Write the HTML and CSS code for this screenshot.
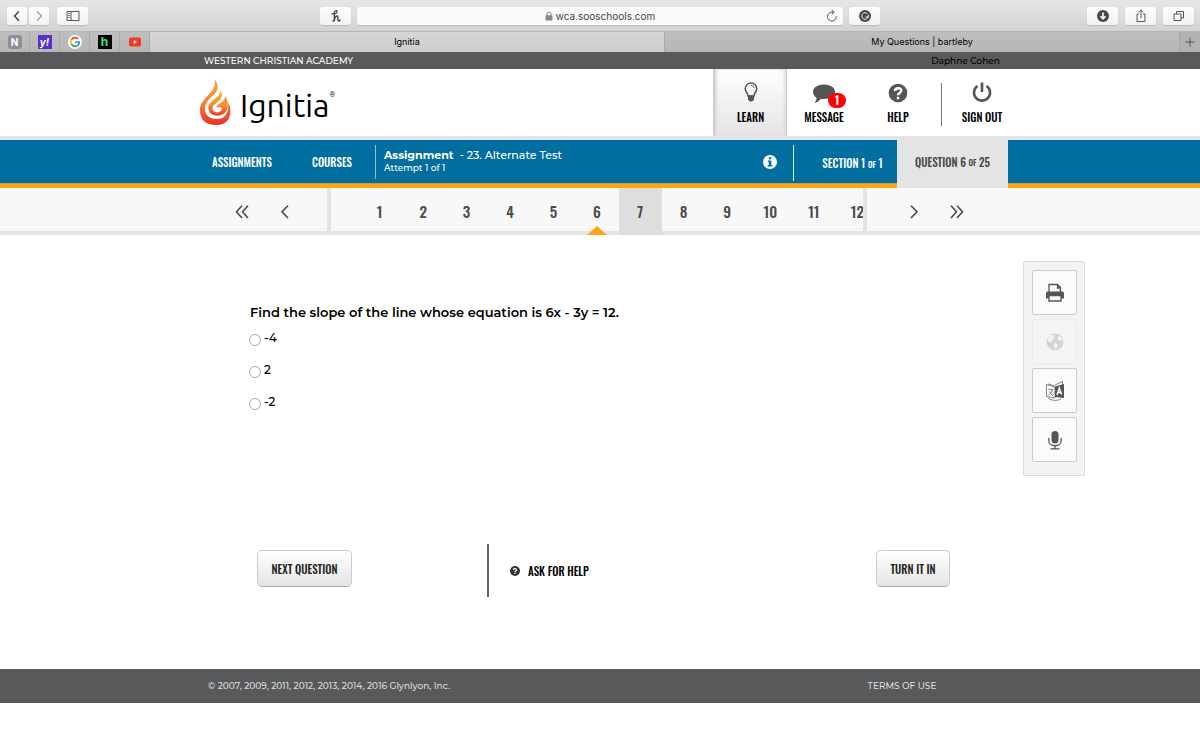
FILE: index.html
```html
<!DOCTYPE html>
<html lang="en">
<head>
<meta charset="utf-8">
<meta name="viewport" content="width=device-width, initial-scale=1">
<title>Ignitia</title>
<link rel="stylesheet" href="styles.css">
</head>
<body>
<div class="toolbar">
  <div class="tools tools-left">
    <div class="pair">
      <button class="tool" aria-label="Back"><svg width="20" height="18" viewBox="0 0 20 18"><path d="M12 4.500 7.500 9l4.500 4.800" class="ln dark"/></svg></button>
      <button class="tool" aria-label="Forward"><svg width="20" height="18" viewBox="0 0 20 18"><path d="M8 4.500 12.500 9 8 13.800" class="ln pale"/></svg></button>
    </div>
    <button class="tool wide" aria-label="Sidebar"><svg width="16" height="18" viewBox="0 0 16 18"><path d="M2 4.500h12v9H2zM6 4.500v9M3.200 6.500h1.500M3.200 8.500h1.500M3.200 10.500h1.500" class="ln thin"/></svg></button>
  </div>
  <button class="tool wide" aria-label="Honey"><svg width="18" height="18" viewBox="0 0 18 18"><path d="M4.500 6.800c3.500.6 5.500-.6 5.500-2.400C10 3 7.300 3.500 7.300 6v8c.3-2.800 1.300-5 2.800-5 1.900 0-.3 5 1.500 5 .8 0 1.400-.5 1.900-1.300M5.500 14h1.800" class="ln honey"/></svg></button>
  <div class="address">
    <span class="site"><svg width="8" height="10" viewBox="0 0 8 10"><path d="M2 5V3a2 2 0 0 1 4 0v2" fill="none" stroke="#888"/><rect x=".5" y="4.300" width="7" height="5.200" rx=".7" fill="#888"/></svg><span>wca.sooschools.com</span></span>
    <button class="reload" aria-label="Reload"><svg width="12" height="14" viewBox="0 0 12 14"><path d="M10.300 7.200A4.400 4.400 0 1 1 6 3.200h1.500M5.700 1l2.500 2.200-2.500 2.300" class="ln thin"/></svg></button>
  </div>
  <button class="tool wide" aria-label="Grammarly"><svg width="14" height="14" viewBox="0 0 14 14"><circle cx="7" cy="7" r="6" fill="#484848"/><path d="M9.500 4.800A3.300 3.300 0 1 0 10.200 8H7.500M10.300 5.700v2.700" fill="none" stroke="#eee"/></svg></button>
  <div class="tools tools-right">
    <button class="tool wide" aria-label="Downloads"><svg width="14" height="14" viewBox="0 0 14 14"><circle cx="7" cy="7" r="6" fill="#484848"/><path d="M7 3.500v6M4.500 7.200 7 9.800l2.500-2.600" fill="none" stroke="#fff" stroke-width="1.600"/></svg></button>
    <button class="tool wide" aria-label="Share"><svg width="14" height="16" viewBox="0 0 14 16"><path d="M5 6H3v7.500h8V6H9M7 10V2M4.700 4.200 7 1.800l2.300 2.400" class="ln thin"/></svg></button>
    <button class="tool wide" aria-label="Show tabs"><svg width="14" height="14" viewBox="0 0 14 14"><path d="M2 5h7v6.500H2zM4.500 5V2.500h7V9H9" class="ln thin"/></svg></button>
  </div>
</div>
<div class="tabs">
  <a class="pin" href="#"><svg width="14" height="14" viewBox="0 0 14 14" aria-hidden="true"><rect width="14" height="14" rx="3" fill="#8e8e99"/></svg><b class="glyph">N</b></a>
  <a class="pin" href="#"><svg width="14" height="14" viewBox="0 0 14 14" aria-hidden="true"><rect width="14" height="14" fill="#5530cc"/></svg><b class="glyph slant">y!</b></a>
  <a class="pin" href="#" aria-label="Google"><svg width="14" height="14" viewBox="0 0 14 14"><circle cx="7" cy="7" r="7" fill="#fff"/><g fill="none" stroke-width="1.700"><path d="M10.200 3.900A4.300 4.300 0 0 0 3.400 4.700" stroke="#ea4335"/><path d="M3.400 4.700a4.300 4.300 0 0 0 0 4.600" stroke="#fbbc05"/><path d="M3.400 9.300a4.300 4.300 0 0 0 6.300 1.200" stroke="#34a853"/><path d="M9.700 10.500A4.300 4.300 0 0 0 11.300 7H7" stroke="#4285f4"/></g></svg></a>
  <a class="pin" href="#"><svg width="14" height="14" viewBox="0 0 14 14" aria-hidden="true"><rect width="14" height="14" fill="#000"/></svg><b class="glyph green">h</b></a>
  <a class="pin" href="#" aria-label="YouTube"><svg width="12" height="10" viewBox="0 0 12 10"><rect y=".5" width="12" height="9" rx="2" fill="#ee3a24"/><path d="M4.700 3v4L8 5z" fill="#fff"/></svg></a>
  <a class="tab current" href="#">Ignitia</a>
  <a class="tab" href="#">My Questions | bartleby</a>
  <button class="add" aria-label="New tab"><svg width="10" height="10" viewBox="0 0 10 10"><path d="M5 .5v9M.5 5h9" class="ln thin"/></svg></button>
</div>

<div class="school shell"><span>WESTERN CHRISTIAN ACADEMY</span><span class="student">Daphne Cohen</span></div>

<header class="masthead shell">
  <a class="brand" href="#">
    <svg width="32" height="47" viewBox="0 0 32 47" aria-hidden="true">
      <defs><linearGradient id="fire" x1="0" y1="0" x2="0" y2="1"><stop offset="0" stop-color="#f7a531"/><stop offset=".5" stop-color="#f58634"/><stop offset="1" stop-color="#e92e2b"/></linearGradient>
      <linearGradient id="ember" x1="0" y1="0" x2="0" y2="1"><stop offset="0" stop-color="#fbb03b"/><stop offset=".6" stop-color="#f68b33"/><stop offset="1" stop-color="#ea3a2c"/></linearGradient></defs>
      <path d="M14.500 0c5 7 4 11-1 16C8 21 5 25 5 30c0 7 6 10 12 10 8 0 12-6 11-17 5 9 3 23-12 23C6 46 0 41 0 31 0 18 18 14 14.500 0z" fill="url(#fire)"/>
      <path d="M20.500 11c3 6 1 9-4 13-4 3-5 5-3 8 2 2 6 2 8-1 1-2 0-3-2-3-1 0-2 1-3 0 0-3 8-4 9-11 3 6 3 12 0 16-4 5-13 5-16 0-3-6 0-9 5-13 4-3 6-5 6-9z" fill="url(#ember)"/>
    </svg>
    <span class="name">Ignitia</span><sup class="reg">®</sup>
  </a>
  <nav class="menu">
    <a class="item learn" href="#"><svg width="24" height="24" viewBox="0 0 24 24"><path d="M9 15c0-3-2.800-4-2.800-7.200a5.800 5.800 0 0 1 11.600 0C17.800 11 15 12 15 15z" fill="none" stroke="#555" stroke-width="1.500"/><path d="M12 4.500c1.800 0 3 1 3.200 2.700" fill="none" stroke="#555"/><path d="M9 14.500h6v4.500l-2 1.500h-2L9 19z" fill="#555"/></svg><span>LEARN</span></a>
    <a class="item message" href="#"><span class="bubble"><svg width="24" height="24" viewBox="0 0 24 24"><path d="M12 3.500c6 0 11 3 11 7s-5 7.500-11 7.500c-1 0-2 0-3-.3C7 20 5 21.500 2.500 21.800c1.500-1.500 2-3.300 2-5C2 15.500 1 13 1 10.500c0-4 5-7 11-7z" fill="#555"/></svg><b class="badge">1</b></span><span>MESSAGE</span></a>
    <a class="item help" href="#"><svg width="24" height="24" viewBox="0 0 24 24"><circle cx="12" cy="12" r="9.300" fill="#555"/><path d="M9 10c0-4 6.500-3.500 6.300-.5C15.200 11.500 12 12 12 14.300M12 15.800v2.500" fill="none" stroke="#fff" stroke-width="2.500"/></svg><span>HELP</span></a>
    <span class="rule"></span>
    <a class="item sign" href="#"><svg width="24" height="24" viewBox="0 0 24 24"><path d="M7.500 5a8 8 0 1 0 9 0M12 1.500v9.500" fill="none" stroke="#555" stroke-width="2.600"/></svg><span>SIGN OUT</span></a>
  </nav>
</header>

<div class="bluebar shell">
  <nav class="links"><a href="#">ASSIGNMENTS</a><a href="#">COURSES</a></nav>
  <div class="task"><div><strong>Assignment</strong> &nbsp;- 23. Alternate Test</div><div class="attempt">Attempt 1 of 1</div></div>
  <button class="info" aria-label="Information"><svg width="14" height="14" viewBox="0 0 14 14"><circle cx="7" cy="7" r="7" fill="#fff"/><path d="M5.800 2.300h2.500v2H5.800zM4.800 5.500h3.500V10h1v1.500H4.800V10h1V7h-1z" fill="#006e9f"/></svg></button>
  <div class="section"><span>SECTION 1 <small>OF</small> 1</span></div>
  <div class="question-count">QUESTION 6&nbsp;<small>OF</small>&nbsp;25</div>
</div>

<nav class="pager" aria-label="Questions">
  <div class="back">
    <a href="#" aria-label="First"><svg width="14" height="14" viewBox="0 0 14 14"><path d="m7 .8-5.500 6L7 13M13 .8l-5.500 6L13 13" class="arrow"/></svg></a>
    <a href="#" aria-label="Previous"><svg width="14" height="14" viewBox="0 0 14 14"><path d="M10 .8 4 6.800 10 13" class="arrow"/></svg></a>
  </div>
  <div class="window"><div class="numbers">
    <a href="#">1</a><a href="#">2</a><a href="#">3</a><a href="#">4</a><a href="#">5</a><a class="active" href="#">6</a><a class="hover" href="#">7</a><a href="#">8</a><a href="#">9</a><a href="#">10</a><a href="#">11</a><a class="last" href="#">12</a>
  </div></div>
  <div class="forward">
    <a href="#" aria-label="Next"><svg width="14" height="14" viewBox="0 0 14 14"><path d="m4 .8 6 6L4 13" class="arrow"/></svg></a>
    <a href="#" aria-label="Last"><svg width="14" height="14" viewBox="0 0 14 14"><path d="m1 .8 5.500 6L1 13M7 .8l5.500 6L7 13" class="arrow"/></svg></a>
  </div>
</nav>

<main class="work">
  <form class="quiz">
    <fieldset class="answers">
      <legend>Find the slope of the line whose equation is 6x - 3y = 12.</legend>
      <label><input type="radio" name="slope"><span>-4</span></label>
      <label><input type="radio" name="slope"><span>2</span></label>
      <label><input type="radio" name="slope"><span>-2</span></label>
    </fieldset>
    <div class="actions">
      <button class="push next" type="button">NEXT QUESTION</button>
      <a class="ask" href="#"><svg width="10" height="10" viewBox="0 0 24 24"><circle cx="12" cy="12" r="12" fill="#333"/><path d="M8.500 9.500c0-5 7.500-4.300 7 0-.3 2.200-3.500 2.500-3.500 5M12 16v3" fill="none" stroke="#fff" stroke-width="3"/></svg><span>ASK FOR HELP</span></a>
      <button class="push turn" type="button">TURN IT IN</button>
    </div>
  </form>
  <aside class="kit">
    <button aria-label="Print"><svg width="20" height="20" viewBox="0 0 20 20"><path d="M4 10V1.500h8.500l3 3V10M12.500 1.500v3.500h3" fill="none" stroke="#555" stroke-width="1.300"/><path d="M2 8.500h16l1 1.500v5.500H1V10z" fill="#555"/><path d="M4 12.500h12v5.500H4z" fill="#fbfbfb" stroke="#555" stroke-width="1.300"/></svg></button>
    <button aria-label="Web" disabled><svg width="20" height="20" viewBox="0 0 20 20"><circle cx="10" cy="10" r="8.500" fill="#d3d4d4"/><path d="m4 4.500 2.500-1.800 2.500.6 1 1.200-2 .8 1.500 1L7 8l-1 2.500-1.800-.8-1.700-2.200zM14 4l1.500.5 2 3.500-1 1-1.500-1-1.500.5-.8-2zM9.500 11l2.500.8.8 1.700-1.800 3.500-1-.5-.5-2.500-.8-1.500z" fill="#f3f5f5"/></svg></button>
    <button aria-label="Translate"><svg width="20" height="22" viewBox="0 0 20 22"><path d="M1.500 4.500 10 7v11l-8.500-1.500zM3 4l7 2M17.500 1.500 10 5M17.500 1.500v4M3 18c4 3 9 3 13 1" fill="none" stroke="#777" stroke-width=".9"/><path d="m10 6.500 9-2.500v14l-9-1z" fill="#555"/><path d="m12 15 2.300-7 2.300 6.500M13 12.500h3" fill="none" stroke="#fff" stroke-width="1.400"/><path d="m3.500 9 4.500 1M7 9.500c0 3-2 5-3.500 5.500M4 11.500l4 4.500" fill="none" stroke="#666" stroke-width=".9"/></svg></button>
    <button aria-label="Microphone"><svg width="20" height="20" viewBox="0 0 20 20"><rect x="6.500" y="1" width="7" height="12.500" rx="3.500" fill="#555"/><path d="M3.800 8v2.500c0 7 12.400 7 12.400 0V8M10 15.500v3M5.500 18.800h9" fill="none" stroke="#555" stroke-width="1.300"/></svg></button>
  </aside>
</main>

<footer class="foot"><span>© 2007, 2009, 2011, 2012, 2013, 2014, 2016 Glynlyon, Inc.</span><a href="#">TERMS OF USE</a></footer>
</body>
</html>
```
FILE: styles.css
```css
:root {
  --sans: "Montserrat", "Lato", "Liberation Sans", sans-serif;
  --narrow: "Oswald", "Liberation Sans Narrow", "Open Sans Condensed", "Roboto", sans-serif;
  --ui: "Inter", "Roboto", sans-serif;
}
* { box-sizing: border-box; }
body { margin: 0; background: #fff; color: #000; font: 500 9px/14px var(--sans); }
a { color: inherit; text-decoration: none; }
button { font: inherit; color: inherit; padding: 0; border: 0; background: none; }
svg { display: block; flex: none; }
.shell { padding-left: calc((100% - 800px) / 2); padding-right: calc((100% - 816px) / 2); }

.ln { fill: none; stroke: #444; stroke-width: 1.500; }
.ln.thin { stroke: #555; stroke-width: 1; }
.ln.pale { stroke: #999; stroke-width: 1.200; }
.ln.honey { stroke-width: 1.300; }

/* Browser window */
.toolbar { display: flex; align-items: center; gap: 6px; height: 31px; padding: 1px 6px 0 7px; background: linear-gradient(#e6e6e6, #d4d4d4); font-family: var(--ui); font-weight: 400; }
.tools { display: flex; }
.tools-left { flex: 0 0 307px; gap: 8px; }
.tools-right { flex: 1; justify-content: flex-end; gap: 7px; }
.pair { display: flex; gap: 2px; }
.tool { display: flex; align-items: center; justify-content: center; width: 20px; height: 18px; border-radius: 3px; background: linear-gradient(#fdfdfd, #f3f3f3); box-shadow: 0 1px 1px #bbb; }
.tool.wide { flex: none; width: 31px; }
.address { display: flex; align-items: center; flex: 0 0 486px; height: 18px; padding: 0 5px 0 17px; border-radius: 3px; background: #fafafa; box-shadow: 0 1px 1px #bbb; color: #444; font-size: 10px; }
.site { display: flex; align-items: center; justify-content: center; gap: 3px; flex: 1; }
.tabs { display: flex; height: 21px; border-top: 1px solid #b5b5b5; background: linear-gradient(#bebebe, #b6b6b6); font-family: var(--ui); font-size: 9px; font-weight: 400; }
.pin { position: relative; display: flex; align-items: center; justify-content: center; width: 30px; border-right: 1px solid #aaa; }
.glyph { position: absolute; color: #fff; font-size: 10px; }
.slant { font-style: italic; }
.green { color: #42e36b; font-size: 12px; }
.tab { display: flex; align-items: center; justify-content: center; flex: 1; }
.tab.current { border-right: 1px solid #aaa; background: linear-gradient(#d6d6d6, #cdcdcd); }
.add { display: flex; align-items: center; justify-content: center; width: 21px; border-left: 1px solid #a5a5a5; background: #b2b2b2; }

/* Site header */
.school { display: flex; justify-content: space-between; align-items: center; height: 17px; background: #58595b; color: #fff; }
.school > :first-child { padding-left: 4px; }
.school .student { padding-right: 8px; color: #000; }
.masthead { display: flex; justify-content: space-between; min-height: 71px; border-bottom: 4px solid #e4e4e4; }
.brand { display: flex; align-items: center; }
.name { padding: 4px 0 0 8px; font: 32px/40px "Ubuntu", "Noto Sans", sans-serif; }
.reg { align-self: flex-start; padding-top: 21px; font-size: 7px; line-height: 10px; }
.menu { display: flex; font: 500 11px/14px var(--narrow); }
.item { display: flex; flex-direction: column; align-items: center; gap: 5px; width: 74px; padding-top: 12px; white-space: nowrap; }
.learn { border: 1px solid #ccc; border-width: 0 1px 0 2px; background: linear-gradient(#fff, #e4e4e4); box-shadow: inset 2px 0 3px #ddd, inset -2px 0 3px #ddd; }
.bubble { position: relative; }
.badge { position: absolute; left: 16px; top: 12px; width: 18px; height: 15px; border-radius: 8px; background: #f00; color: #fff; line-height: 15px; text-align: center; }
.rule { width: 1px; margin: 14px 14px 10px 6px; background: #777; }
.item.sign { width: 52px; }

.bluebar { display: flex; min-height: 48px; color: #fff; background: linear-gradient(#006e9f 0 43px, #d69a35 43px 44px, #faa61a 44px); font: 500 11px/14px var(--narrow); }
small { font-size: 8px; }
.links { display: flex; gap: 40px; padding-left: 12px; flex: 0 0 175px; align-items: center; padding-bottom: 4px; }
.task { flex: 1; margin: 5px 0 9px; padding: 4px 8px; border-left: 1px solid #8fc0d6; font: 500 11px/13px var(--sans); }
.attempt { font-size: 9px; line-height: 11px; }
.info { padding: 0 16px 4px 0; }
.section { display: flex; align-items: center; justify-content: center; width: 104px; margin: 5px 0 7px; padding-left: 14px; border-left: 1px solid #dcecf3; }
.question-count { display: flex; align-items: center; justify-content: center; width: 111px; padding-bottom: 4px; background: #e4e4e4; color: #444; white-space: nowrap; }

.pager { display: flex; gap: 4px; height: 47px; background: #e4e4e4; color: #4a4a4a; font: 500 15px/46px var(--narrow); }
.arrow { fill: none; stroke: #4a4a4a; stroke-width: 1.600; }
.back, .forward { display: flex; align-items: center; flex: 1; gap: 29px; height: 43px; padding-top: 4px; background: #f8f8f8; }
.back { flex: 0 0 calc(50% - 273px); justify-content: flex-end; padding-right: 35px; }
.forward { padding-left: 40px; }
.window { flex: 0 0 532px; padding-left: 27px; overflow: hidden; background: linear-gradient(#f8f8f8 43px, transparent 43px); }
.numbers { display: grid; grid-template-columns: repeat(12, 1fr); width: 521px; height: 47px; text-align: center; }
.numbers a { position: relative; }
.active::after { content: ""; position: absolute; left: 12px; bottom: 0; border: solid transparent; border-width: 0 10px 9px; border-bottom-color: #faa61a; }
.hover { background: #dedede; }

/* Question */
.work { display: flex; justify-content: space-between; align-items: flex-start; min-height: 434px; padding: 26px calc((100% - 970px) / 2) 0 calc((100% - 700px) / 2); }
.quiz { flex: 0 0 700px; padding-top: 43px; }
.answers { margin: 0; padding: 0; border: 0; font-size: 12px; line-height: 16px; }
legend { padding: 0 0 10px; font-size: 13px; font-weight: 600; }
.answers label { display: flex; align-items: flex-start; gap: 3px; height: 32px; }
.answers input { appearance: none; width: 12px; height: 12px; margin: 4px 0 0 -1px; border: 1px solid #aaa; border-radius: 50%; background: #fff; }
.actions { display: flex; align-items: center; height: 53px; margin-top: 118px; padding-left: 7px; font: 500 11px/14px var(--narrow); }
.push { height: 37px; margin-bottom: 4px; border: 1px solid #ccc; border-bottom-color: #aaa; border-radius: 5px; background: linear-gradient(#fff, #e4e4e4); color: #222; }
.next { width: 95px; }
.turn { width: 74px; }
.ask { display: flex; align-items: center; gap: 8px; height: 100%; margin: 0 auto 0 135px; padding-left: 21px; border-left: 2px solid #666; color: #000; }
.kit { display: grid; gap: 4px; width: 62px; padding: 8px 8px 13px; border: 1px solid #d9dada; border-radius: 2px; background: #f2f4f4; }
.kit button { display: flex; align-items: center; justify-content: center; width: 45px; height: 45px; border: 1px solid #ccc; border-radius: 2px; background: #fbfbfb; }
.kit button:disabled { border-color: #e9ebeb; background: #f3f5f5; }

.foot { display: flex; justify-content: space-between; align-items: center; min-height: 34px; padding: 0 calc((100% - 673px) / 2) 0 calc((100% - 784px) / 2); background: #58595b; color: #ddd; }
```
